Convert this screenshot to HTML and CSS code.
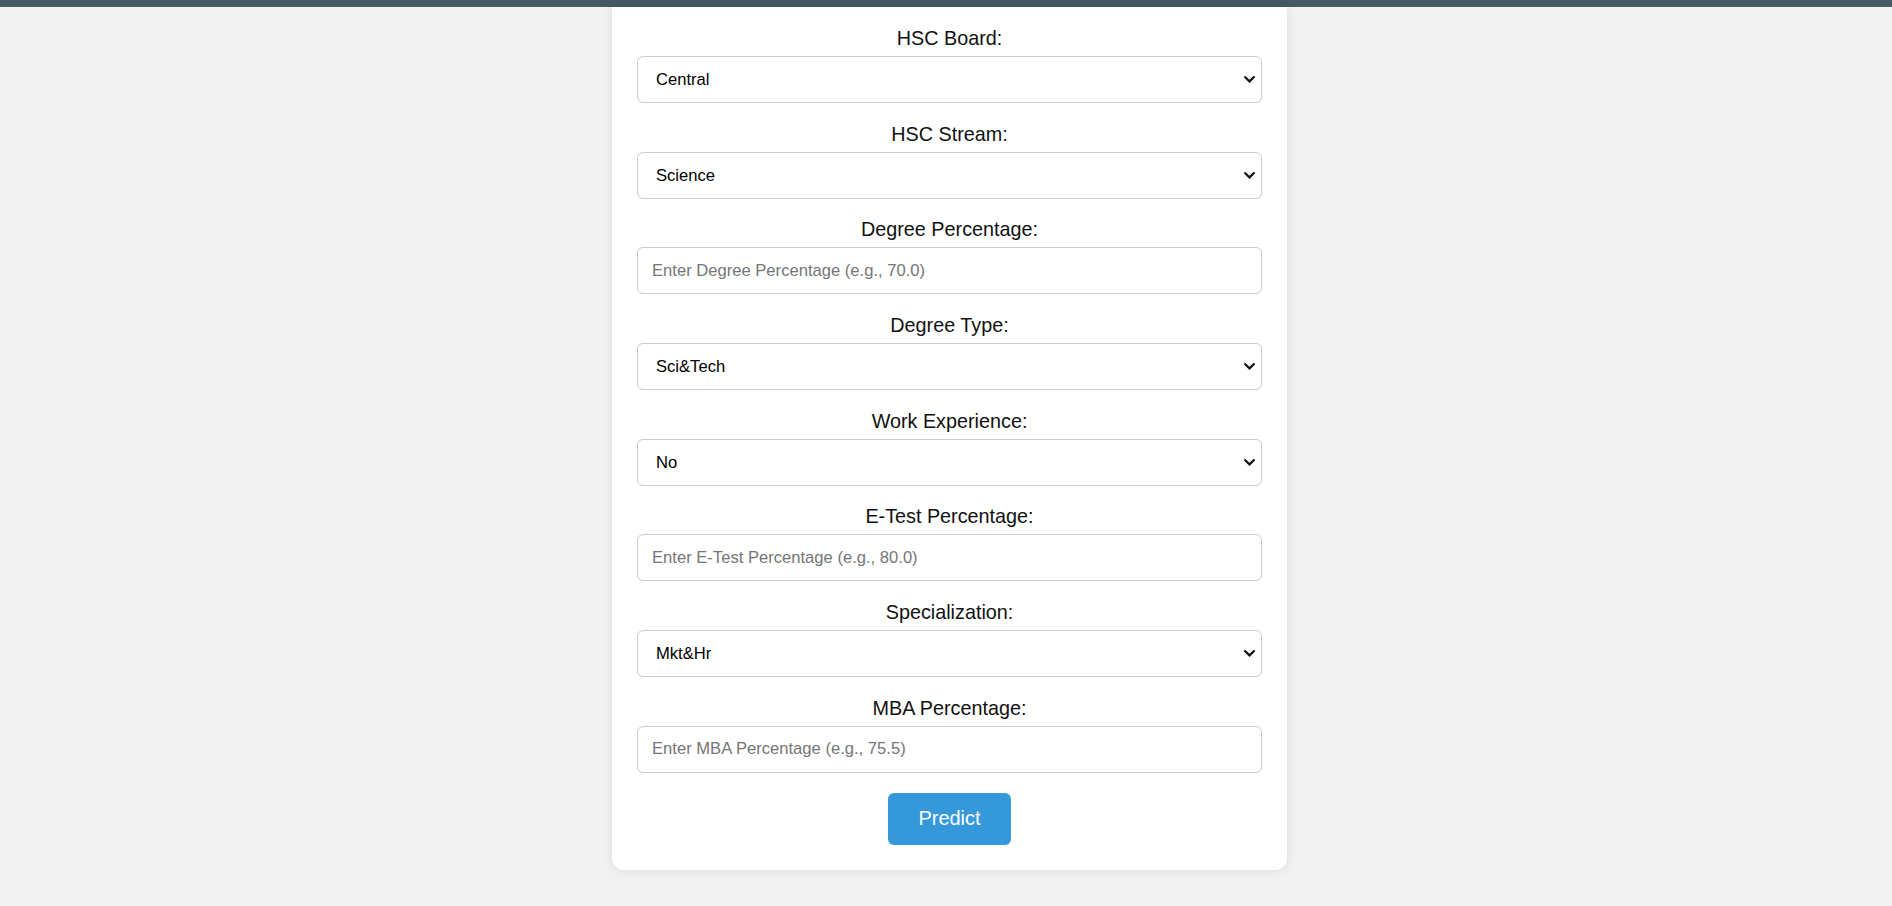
FILE: index.html
```html
<!DOCTYPE html>
<html lang="en">
<head>
<meta charset="utf-8">
<title>Placement Prediction</title>
<link rel="stylesheet" href="styles.css">
</head>
<body>
<div class="topbar"></div>
<main class="card">
  <form class="form">
    <div class="group">
      <label class="label" for="hsc_b">HSC Board:</label>
      <select class="field select" id="hsc_b">
        <option>Central</option>
        <option>Others</option>
      </select>
    </div>
    <div class="group">
      <label class="label" for="hsc_s">HSC Stream:</label>
      <select class="field select" id="hsc_s">
        <option>Science</option>
        <option>Commerce</option>
        <option>Arts</option>
      </select>
    </div>
    <div class="group">
      <label class="label" for="degree_p">Degree Percentage:</label>
      <input class="field" id="degree_p" type="text" placeholder="Enter Degree Percentage (e.g., 70.0)">
    </div>
    <div class="group">
      <label class="label" for="degree_t">Degree Type:</label>
      <select class="field select" id="degree_t">
        <option>Sci&amp;Tech</option>
        <option>Comm&amp;Mgmt</option>
        <option>Others</option>
      </select>
    </div>
    <div class="group">
      <label class="label" for="workex">Work Experience:</label>
      <select class="field select" id="workex">
        <option>No</option>
        <option>Yes</option>
      </select>
    </div>
    <div class="group">
      <label class="label" for="etest_p">E-Test Percentage:</label>
      <input class="field" id="etest_p" type="text" placeholder="Enter E-Test Percentage (e.g., 80.0)">
    </div>
    <div class="group">
      <label class="label" for="spec">Specialization:</label>
      <select class="field select" id="spec">
        <option>Mkt&amp;Hr</option>
        <option>Mkt&amp;Fin</option>
      </select>
    </div>
    <div class="group">
      <label class="label" for="mba_p">MBA Percentage:</label>
      <input class="field" id="mba_p" type="text" placeholder="Enter MBA Percentage (e.g., 75.5)">
    </div>
    <div class="actions">
      <button class="btn" type="button">Predict</button>
    </div>
  </form>
</main>
</body>
</html>
```
FILE: styles.css
```css
html, body {
  margin: 0;
  padding: 0;
}
body {
  background: #f2f2f2;
  font-family: "Liberation Sans", Arial, sans-serif;
  color: #111;
  height: 906px;
  overflow: hidden;
  padding-left: 7px;
  box-sizing: border-box;
}
.topbar {
  height: 7px;
  background: #455a64;
  margin-left: -7px;
}
.card {
  width: 625px;
  margin: 0 auto;
  background: #fff;
  padding: 20px 25px 25px;
  border-radius: 0 0 12px 12px;
  box-shadow: 0 0 12px rgba(0, 0, 0, 0.1);
}
.form {
  display: flex;
  flex-direction: column;
}
.group {
  display: flex;
  flex-direction: column;
  margin-bottom: 19.7px;
}
.group:last-of-type {
  margin-bottom: 20px;
}
.label {
  display: block;
  text-align: center;
  font-size: 19.8px;
  line-height: 23px;
  margin-bottom: 6px;
  color: #111;
}
.field {
  box-sizing: border-box;
  width: 100%;
  height: 47px;
  padding: 0 14px;
  font-family: "Liberation Sans", Arial, sans-serif;
  font-size: 16.6px;
  color: #000;
  background-color: #fff;
  border: 1px solid #ccc;
  border-radius: 6px;
  outline: none;
}
.select {
  -webkit-appearance: none;
  appearance: none;
  padding: 0 30px 0 18px;
  background-image: url("data:image/svg+xml;utf8,<svg xmlns='http://www.w3.org/2000/svg' width='11' height='7' viewBox='0 0 11 7'><path d='M1.2 1.2 L5.5 5.4 L9.8 1.2' fill='none' stroke='%23111' stroke-width='2.2' stroke-linecap='square'/></svg>");
  background-repeat: no-repeat;
  background-position: right 6px center;
  background-size: 11px 7px;
}
.field::placeholder {
  color: #767676;
}
.actions {
  display: flex;
  justify-content: center;
}
.btn {
  width: 123px;
  height: 52px;
  background: #3498db;
  color: #fff;
  border: none;
  border-radius: 6px;
  font-family: "Liberation Sans", Arial, sans-serif;
  font-size: 20px;
  cursor: pointer;
}
```
